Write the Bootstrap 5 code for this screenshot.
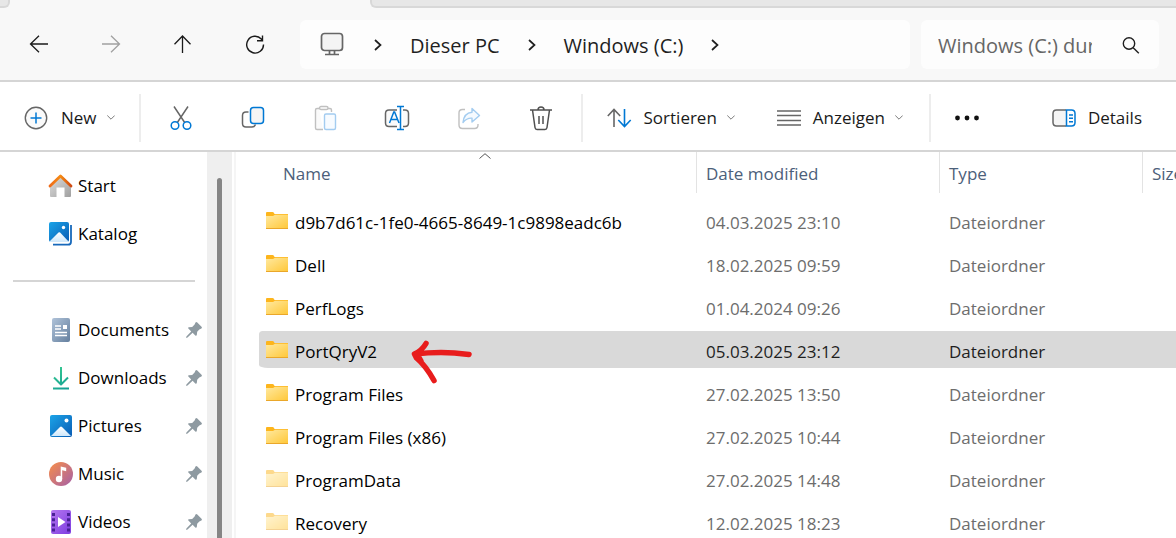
<!DOCTYPE html>
<html lang="de">
<head>
<meta charset="utf-8">
<meta name="viewport" content="width=device-width, initial-scale=1">
<title>Windows (C:)</title>
<link href="https://cdn.jsdelivr.net/npm/bootstrap@5.3.0/dist/css/bootstrap.min.css" rel="stylesheet">
<style>
body{font-family:"Open Sans","Noto Sans",sans-serif;font-size:17px;line-height:24px;color:#000;background:#fff}
svg{display:block;flex:none;fill:none;overflow:visible}
button{font:inherit}
.tabstrip{height:8px;background:#f8f8f8}
.tab-rest{background:#e7e7e7;border-bottom:2px solid #d8d8d8}
.tab-before{width:10px;border-right:2px solid #d8d8d8;border-bottom-right-radius:6px}
.tab-current{width:360px}
.tab-after{border-left:2px solid #d8d8d8;border-bottom-left-radius:6px}
.navrow{background:#f8f8f8;border-bottom:2px solid #d5d5d5;padding:12px 17px 11px 3px}
.tool{width:72px;height:48px;border:0;background:none;padding:0;display:flex;align-items:center;justify-content:center;color:#1a1a1a}
.address,.finder{background:#fdfdfd;border-radius:6px;height:49px}
.address{margin-left:9px;padding-left:20px;font-size:20px}
.address>svg{margin-right:2px}
.address a{color:#1f1f1f;text-decoration:none;white-space:nowrap;padding-top:2px}
.address ol{list-style:none;padding-top:2px}
.address li svg{margin:0 28px}
.finder{width:238px;margin-left:11px;padding:3px 20px 0 17px}
.finder input{width:154px;border:0;outline:0;background:none;padding:0;font-size:20px;color:#666}
.finder input::placeholder{color:#666;opacity:1}
.finder button,.labelled{border:0;background:none;padding:0;color:#1a1a1a}
.toolbar-row{height:70px;border-bottom:2px solid #d5d5d5;padding:4px 34px 0 0}
.sep{width:2px;height:48px;background:#ededed;flex:none}
.labelled{display:flex;align-items:center;height:48px;white-space:nowrap}
.labelled svg:first-child{margin-right:12px}
.labelled .chev{margin-left:10px}
.view-btn{margin:0 26px 0 42px}
.side{width:207px;padding-top:10px;flex:none}
.side a{display:flex;align-items:center;height:48px;padding:0 5px 0 48px;color:#000;text-decoration:none}
.side a svg:first-child{margin-right:5px}
.side-rule{height:48px;padding:22px 12px 0 13px}
.side-rule hr{margin:0;border:0;border-top:2px solid #d5d5d5;opacity:1}
.track{width:25px;background:#efefef;padding:26px 10px 0;flex:none}
.thumb{height:100%;background:#858585;border-radius:3px 3px 0 0}
.pane-edge{width:2px;margin:0 23px 0 2px;background:#f5f5f5;flex:none}
.files{table-layout:fixed;width:100%;border-collapse:separate;border-spacing:0}
.files th{font-weight:400;color:#4c607a;padding:0 0 9px;white-space:nowrap}
.files th div{height:41px;border-left:1px solid #e3e3e3;padding:10px 0 0 9px}
.files th .first-head{border:0;margin-left:15px}
.sort-mark{top:1px;left:50%}
.files td{height:43px;padding:5px 0 0 10px;border-bottom:6px solid transparent;background-clip:padding-box;color:#6d6d6d;white-space:nowrap}
.files td:first-child{color:#000;padding-left:7px}
.files td .d-flex{gap:7px}
.files .chosen td{background-color:#d9d9d9;color:#1f1f1f}
.files .chosen td:first-child{color:#000;border-radius:3px 0 0 9px}
.pen{left:152px;top:8px;z-index:2}
.c-name{width:437px}.c-date{width:243px}.c-type{width:203px}
</style>
</head>
<body>
<svg width="0" height="0" class="position-absolute" aria-hidden="true">
<defs>
<linearGradient id="gFold" x1="0" y1="0" x2="1" y2="1"><stop stop-color="#ffe9a0"/><stop offset="1" stop-color="#ffc83a"/></linearGradient>
<linearGradient id="gRoof" x1="0" y1="0" x2="1" y2="0"><stop stop-color="#ef6c1a"/><stop offset=".5" stop-color="#f58a12"/><stop offset="1" stop-color="#d04a12"/></linearGradient>
<linearGradient id="gWall" x1="0" y1="0" x2="1" y2="1"><stop stop-color="#dedede"/><stop offset="1" stop-color="#a0a0a0"/></linearGradient>
<linearGradient id="gPic" x1="0" y1="0" x2="1" y2="1"><stop stop-color="#1ba4e8"/><stop offset="1" stop-color="#0a5cb4"/></linearGradient>
<linearGradient id="gHill" x1="0" y1="0" x2="0" y2="1"><stop stop-color="#fff"/><stop offset="1" stop-color="#cfe8fb"/></linearGradient>
<linearGradient id="gDoc" x1="0" y1="0" x2="1" y2="1"><stop stop-color="#b0c3d9"/><stop offset="1" stop-color="#647f9e"/></linearGradient>
<linearGradient id="gDown" gradientUnits="userSpaceOnUse" x1="4" y1="0" x2="20" y2="24"><stop stop-color="#3ccf91"/><stop offset="1" stop-color="#109c94"/></linearGradient>
<linearGradient id="gMus" x1="0" y1="0" x2="1" y2="1"><stop offset=".1" stop-color="#f08a52"/><stop offset="1" stop-color="#a560a8"/></linearGradient>
<linearGradient id="gVid" x1="0" y1="0" x2="1" y2="1"><stop stop-color="#b577f0"/><stop offset="1" stop-color="#7d3ce0"/></linearGradient>
<symbol id="folder" viewBox="0 0 22 22"><path d="M0 1q0-1 1-1h5.500q1 0 1.500 1l.5 1H22v8H0z" fill="#fdb51c"/><path d="M0 4h7l2-1.200h13V16H0z" fill="url(#gFold)"/><path d="M0 16.500h22" stroke="#eaa72a"/></symbol>
<symbol id="pin" viewBox="0 0 16 16"><path d="M9.500.4Q10.500-.3 11.300.6l4.200 4.200q.9.900-.1 1.600L13.300 7.500l-2.100 2.300-.4 3.300q-.5 1.300-1.500.4L6.600 10.800 1.500 15.500l-1.400.5.3-1.600 4.800-5L2.400 6.600q-.8-.9.500-1.400l3.300-.3L8.600 2.600z" fill="#8e9aa1"/></symbol>
<symbol id="go" viewBox="0 0 8 12"><path d="M1 1l5.500 5L1 11" fill="none" stroke="#1f1f1f" stroke-width="1.700"/></symbol>
<symbol id="down" viewBox="0 0 8 5"><path d="M.3.500 4 4.200 7.700.5" fill="none" stroke="#7a7a7a"/></symbol>
</defs>
</svg>

<div class="vh-100 d-flex flex-column overflow-hidden">
<div class="tabstrip d-flex">
<div class="tab-rest tab-before"></div><div class="tab-current"></div><div class="tab-rest tab-after flex-grow-1"></div>
</div>

<header class="navrow d-flex align-items-center">
<button class="tool" aria-label="Zurück"><svg width="20" height="18" stroke="#1a1a1a" stroke-width="1.300"><path d="M19 9H1.500M10 .8 1.500 9l8.500 8.200"/></svg></button>
<button class="tool" aria-label="Vorwärts"><svg width="20" height="18" stroke="#a0a0a0" stroke-width="1.300"><path d="M1 9h17.500M10 .8 18.500 9 10 17.200"/></svg></button>
<button class="tool" aria-label="Nach oben"><svg width="18" height="18" stroke="#1a1a1a" stroke-width="1.300"><path d="M8.500 18V1M.5 9.300 8.500 1l8 8.300"/></svg></button>
<button class="tool" aria-label="Aktualisieren"><svg width="20" height="18" stroke="#1a1a1a" stroke-width="1.400"><path d="M18.500 9.500A8.400 8.400 0 1 1 16.300 4l1.200 1.500M17.500.5v5.200H12"/></svg></button>
<nav class="address flex-grow-1 d-flex align-items-center" aria-label="Pfad">
<svg width="24" height="24" stroke="#666" stroke-width="1.700"><rect x="1.500" y="1.500" width="21" height="17" rx="3" fill="#f4f4f4"/><path d="M9.500 18.500v4M14.500 18.500v4M5 22.500h14"/></svg>
<ol class="d-flex align-items-center m-0 ps-0">
<li class="d-flex align-items-center"><svg width="8" height="12"><use href="#go"/></svg></li>
<li class="d-flex align-items-center"><a href="#">Dieser PC</a><svg width="8" height="12"><use href="#go"/></svg></li>
<li class="d-flex align-items-center"><a href="#">Windows (C:)</a><svg width="8" height="12"><use href="#go"/></svg></li>
</ol>
</nav>
<form class="finder d-flex align-items-center justify-content-between">
<input type="text" placeholder="Windows (C:) durchsuchen" aria-label="Windows (C:) durchsuchen">
<button type="button" aria-label="Suchen"><svg width="17" height="17" stroke="#1f1f1f" stroke-width="1.400"><circle cx="7" cy="6.500" r="5.700"/><path d="m11.200 10.700 5.600 5.600"/></svg></button>
</form>
</header>

<div class="toolbar-row d-flex align-items-center flex-shrink-0" role="toolbar" aria-label="Befehle">
<button class="labelled ps-4"><svg width="25" height="24"><circle cx="12" cy="12" r="10.700" fill="#fafafa" stroke="#666" stroke-width="1.400"/><path d="M12 6.500v11M6.500 12h11" stroke="#0078d4" stroke-width="1.500"/></svg>New<svg class="chev" width="8" height="5"><use href="#down"/></svg></button>
<div class="sep ms-4"></div>
<button class="tool ms-1" aria-label="Ausschneiden"><svg width="24" height="26" stroke-width="1.500"><path d="M5 1.500 16 18M19 1.500 8 18" stroke="#666"/><g stroke="#0078d4" fill="#fff"><circle cx="6" cy="20.500" r="3.800"/><circle cx="18" cy="20.500" r="3.800"/></g></svg></button>
<button class="tool" aria-label="Kopieren"><svg width="24" height="24" stroke-width="1.500"><path d="M7.500 6H5Q1.500 6 1.500 9.500v8Q1.500 21 5 21h6q2.500 0 3.500-2.500" stroke="#666"/><rect x="9.500" y="1.500" width="13" height="16" rx="3" fill="#f5f5f5" stroke="#0078d4"/></svg></button>
<button class="tool" aria-label="Einfügen"><svg width="24" height="26" stroke-width="1.400"><path d="M6 3.500H4Q2.500 3.500 2.500 5v18q0 1.500 1.500 1.500h6M15 3.500h2q1.500 0 1.500 1.500v2" stroke="#c0c0c0" fill="#fafafa"/><rect x="6.500" y="1.500" width="8.500" height="3" rx="1.500" fill="#fff" stroke="#c0c0c0"/><rect x="11.500" y="9" width="11" height="15.500" rx="1.500" fill="#f7fbff" stroke="#a3ccf0"/></svg></button>
<button class="tool" aria-label="Umbenennen"><svg width="26" height="26" stroke-width="1.500"><path d="M13 21.500H5Q1.500 21.500 1.500 18V8.500Q1.500 5 5 5h8M19 5h2q3.500 0 3.500 3.500V18q0 3.500-3.500 3.500h-2" stroke="#666" fill="#fafafa"/><path d="m5.500 18 4.300-11h.8L15 18M7 14.500h6.500M16.500 1.500v23M13 1.500h7M13 24.500h7" stroke="#0078d4"/></svg></button>
<button class="tool" aria-label="Freigeben"><svg width="24" height="24" stroke-width="1.400"><path d="M8 3.500H5.500Q2 3.500 2 7v12q0 3.500 3.500 3.500h12Q21 22.500 21 19v-1" stroke="#c0c0c0"/><path d="M15 2.500 22.500 9.500 15 16v-3.800q-5-.5-9 4.300 1-9.500 9-10.200z" fill="#f5faff" stroke="#a3ccf0" stroke-linejoin="round"/></svg></button>
<button class="tool" aria-label="Löschen"><svg width="24" height="26" stroke="#505050" stroke-width="1.500"><path d="M1 5h22M3.500 5 6 22.500q.3 2 2 2h8q1.700 0 2-2L20.500 5M9 5q0-3 3-3t3 3M10 11v8M14 11v8"/></svg></button>
<div class="sep ms-1"></div>
<button class="labelled ms-4"><svg width="25" height="20" stroke-width="1.600"><path d="M7 19V1.500M.8 8 7 1.500 13.200 8" stroke="#666"/><path d="M17.500 1v17.500M11.300 12l6.200 6.500 6.200-6.500" stroke="#0078d4"/></svg>Sortieren<svg class="chev" width="8" height="5"><use href="#down"/></svg></button>
<button class="labelled view-btn"><svg width="24" height="16" stroke="#666" stroke-width="1.400"><path d="M0 1h24M0 5.500h24M0 10.500h24M0 15h24"/></svg>Anzeigen<svg class="chev" width="8" height="5"><use href="#down"/></svg></button>
<div class="sep"></div>
<button class="tool" aria-label="Mehr anzeigen"><svg width="24" height="6"><g fill="#111"><circle cx="2.500" cy="3" r="2.400"/><circle cx="12" cy="3" r="2.400"/><circle cx="21.500" cy="3" r="2.400"/></g></svg></button>
<button class="labelled ms-auto"><svg width="24" height="18" stroke-width="1.500"><path d="M14 17H4.500Q1 17 1 13.500v-9Q1 1 4.500 1H14" fill="#f5f5f5" stroke="#666"/><path d="M14.500 1h5Q23 1 23 4.500v9q0 3.500-3.500 3.500h-5zM17 6h4M17 9.300h4M17 12.700h4" stroke="#0078d4"/></svg>Details</button>
</div>

<main class="d-flex flex-grow-1 overflow-hidden">
<nav class="side" aria-label="Navigationsbereich">
<a href="#"><svg width="25" height="24"><path d="M2 11 12.500 2 23 11v11q0 1-1 1h-5.500v-9.500h-8V23H3q-1 0-1-1z" fill="url(#gWall)"/><path d="M2 12 12.500 2 23 12" stroke="url(#gRoof)" stroke-width="2.800" stroke-linecap="round" stroke-linejoin="round"/></svg>Start</a>
<a href="#"><svg width="25" height="24"><path d="M5 22.700h15q3 0 3-3V3" stroke="#1769bb" stroke-width="1.800"/><rect x="1" y="0" width="20" height="20" rx="2" fill="url(#gPic)"/><path d="m1 20 9.500-9.500q.8-.7 1.600 0L21 20z" fill="url(#gHill)"/><circle cx="15.500" cy="5.500" r="1.700" fill="#fff"/></svg>Katalog</a>
<div class="side-rule"><hr></div>
<a href="#"><svg width="25" height="24"><rect x="4" width="18" height="24" rx="2" fill="url(#gDoc)"/><path d="M7 8h6M7 11h6M7 14.500h12M7 17.500h12" stroke="#fff" stroke-width="1.300"/><rect x="15" y="7" width="4" height="4" fill="#fff"/></svg><span class="me-auto">Documents</span><svg width="16" height="16"><use href="#pin"/></svg></a>
<a href="#"><svg width="25" height="24" stroke="url(#gDown)" stroke-width="2"><path d="M13 1v17M6 11.500l7 7 7-7M5 22.500h16" stroke-linejoin="round"/></svg><span class="me-auto">Downloads</span><svg width="16" height="16"><use href="#pin"/></svg></a>
<a href="#"><svg width="25" height="24"><rect x="2" y="1" width="22" height="22" rx="2" fill="url(#gPic)"/><path d="m3 22 9-9q1-1 2 0l9 9z" fill="url(#gHill)"/><circle cx="18.500" cy="6.500" r="2" fill="#fff"/></svg><span class="me-auto">Pictures</span><svg width="16" height="16"><use href="#pin"/></svg></a>
<a href="#"><svg width="25" height="24"><circle cx="13" cy="12" r="12" fill="url(#gMus)"/><path d="M12.700 17V4.500l5.500 1.200v3.500l-4-1V17z" fill="#fff"/><circle cx="11" cy="17" r="3.200" fill="#fff"/></svg><span class="me-auto">Music</span><svg width="16" height="16"><use href="#pin"/></svg></a>
<a href="#"><svg width="25" height="24"><rect x="3" width="20" height="24" rx="2" fill="url(#gVid)"/><path d="M10 7v10l7.500-5z" fill="#fff"/><path d="M5.500 3v19M20.500 3v19" stroke="#4a2196" stroke-width="3" stroke-dasharray="3 2.200"/></svg><span class="me-auto">Videos</span><svg width="16" height="16"><use href="#pin"/></svg></a>
</nav>
<div class="track"><div class="thumb"></div></div>
<div class="pane-edge"></div>
<section class="flex-grow-1 overflow-hidden">
<table class="files">
<colgroup><col class="c-name"><col class="c-date"><col class="c-type"><col></colgroup>
<thead><tr>
<th scope="col"><div class="first-head position-relative">Name<svg class="sort-mark position-absolute translate-middle-x" width="12" height="6"><path d="M.5 5.500 6 .7l5.500 4.800" stroke="#555"/></svg></div></th>
<th scope="col"><div>Date modified</div></th><th scope="col"><div>Type</div></th><th scope="col"><div>Size</div></th>
</tr></thead>
<tbody>
<tr><td><div class="d-flex align-items-center"><svg width="22" height="22"><use href="#folder"/></svg>d9b7d61c-1fe0-4665-8649-1c9898eadc6b</div></td><td>04.03.2025 23:10</td><td>Dateiordner</td><td></td></tr>
<tr><td><div class="d-flex align-items-center"><svg width="22" height="22"><use href="#folder"/></svg>Dell</div></td><td>18.02.2025 09:59</td><td>Dateiordner</td><td></td></tr>
<tr><td><div class="d-flex align-items-center"><svg width="22" height="22"><use href="#folder"/></svg>PerfLogs</div></td><td>01.04.2024 09:26</td><td>Dateiordner</td><td></td></tr>
<tr class="chosen"><td class="position-relative"><div class="d-flex align-items-center"><svg width="22" height="22"><use href="#folder"/></svg>PortQryV2</div><svg class="pen position-absolute" width="62" height="46" stroke="#e81c1c" stroke-width="5.500" stroke-linecap="round" stroke-linejoin="round"><path d="M15 4.500Q11 11.500 3.500 15 17 13.500 30 13.500T58 15.500M3.500 15l2 4Q15 27 23 41.500M6 15l4 7"/></svg></td><td>05.03.2025 23:12</td><td>Dateiordner</td><td></td></tr>
<tr><td><div class="d-flex align-items-center"><svg width="22" height="22"><use href="#folder"/></svg>Program Files</div></td><td>27.02.2025 13:50</td><td>Dateiordner</td><td></td></tr>
<tr><td><div class="d-flex align-items-center"><svg width="22" height="22"><use href="#folder"/></svg>Program Files (x86)</div></td><td>27.02.2025 10:44</td><td>Dateiordner</td><td></td></tr>
<tr><td><div class="d-flex align-items-center"><svg class="opacity-50" width="22" height="22"><use href="#folder"/></svg>ProgramData</div></td><td>27.02.2025 14:48</td><td>Dateiordner</td><td></td></tr>
<tr><td><div class="d-flex align-items-center"><svg class="opacity-50" width="22" height="22"><use href="#folder"/></svg>Recovery</div></td><td>12.02.2025 18:23</td><td>Dateiordner</td><td></td></tr>
</tbody>
</table>
</section>
</main>
</div>
<script src="https://cdn.jsdelivr.net/npm/bootstrap@5.3.0/dist/js/bootstrap.bundle.min.js"></script>
</body>
</html>
